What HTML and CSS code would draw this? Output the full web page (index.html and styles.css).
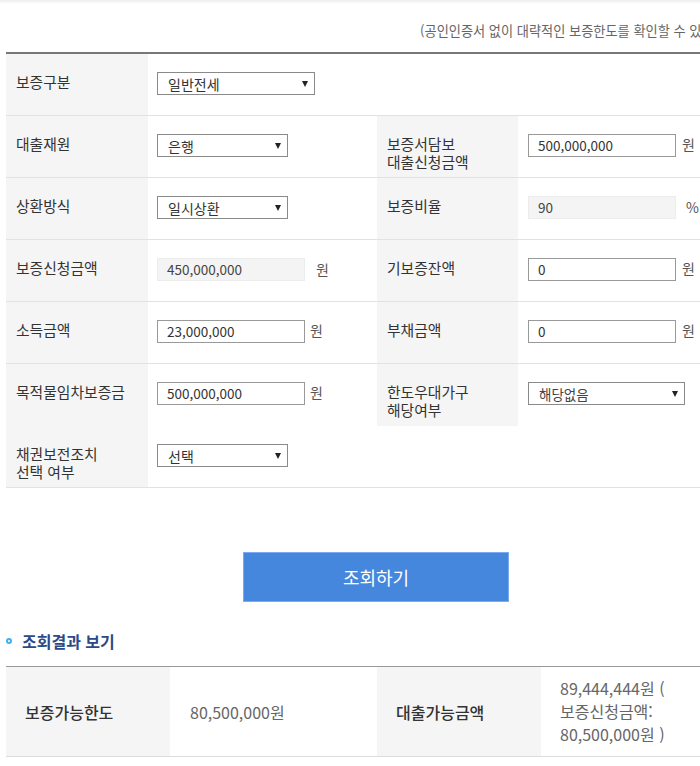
FILE: index.html
```html
<!DOCTYPE html>
<html lang="ko">
<head>
<meta charset="utf-8">
<title>보증한도 조회</title>
<link rel="stylesheet" href="styles.css">
</head>
<body>
<div class="shade"></div>
<div class="wrap">
  <p class="note">(공인인증서 없이 대략적인 보증한도를 확인할 수 있습니다.)</p>

  <div class="form">
    <div class="row">
      <div class="lab">보증구분</div>
      <div class="val"><div class="sel w158"><span>일반전세</span><i class="arr"></i></div></div>
      <div class="blank"></div>
      <div class="blank"></div>
    </div>
    <div class="row">
      <div class="lab">대출재원</div>
      <div class="val"><div class="sel w131"><span>은행</span><i class="arr"></i></div></div>
      <div class="lab">보증서담보<br>대출신청금액</div>
      <div class="val r"><div class="inp">500,000,000</div><span class="unit">원</span></div>
    </div>
    <div class="row">
      <div class="lab">상환방식</div>
      <div class="val"><div class="sel w131"><span>일시상환</span><i class="arr"></i></div></div>
      <div class="lab">보증비율</div>
      <div class="val r"><div class="inp dis">90</div><span class="unit pct">%</span></div>
    </div>
    <div class="row">
      <div class="lab">보증신청금액</div>
      <div class="val"><div class="inp dis">450,000,000</div><span class="unit far">원</span></div>
      <div class="lab">기보증잔액</div>
      <div class="val r"><div class="inp">0</div><span class="unit">원</span></div>
    </div>
    <div class="row">
      <div class="lab">소득금액</div>
      <div class="val"><div class="inp">23,000,000</div><span class="unit">원</span></div>
      <div class="lab">부채금액</div>
      <div class="val r"><div class="inp">0</div><span class="unit">원</span></div>
    </div>
    <div class="row nb">
      <div class="lab">목적물임차보증금</div>
      <div class="val"><div class="inp">500,000,000</div><span class="unit">원</span></div>
      <div class="lab">한도우대가구<br>해당여부</div>
      <div class="val r"><div class="sel w157 sm"><span>해당없음</span><i class="arr"></i></div></div>
    </div>
    <div class="row">
      <div class="lab">채권보전조치<br>선택 여부</div>
      <div class="val"><div class="sel w131"><span>선택</span><i class="arr"></i></div></div>
      <div class="blank"></div>
      <div class="blank"></div>
    </div>
  </div>

  <div class="btnbox"><button class="btn" type="button">조회하기</button></div>

  <h3 class="title"><i class="dot"></i>조회결과 보기</h3>

  <div class="result">
    <div class="rlab">보증가능한도</div>
    <div class="rval">80,500,000원</div>
    <div class="rlab">대출가능금액</div>
    <div class="rval multi">89,444,444원 (<br>보증신청금액:<br>80,500,000원 )</div>
  </div>
</div>
</body>
</html>
```

FILE: styles.css
```css
html, body {
  margin: 0;
  padding: 0;
  background: #fff;
  overflow: hidden;
}
body {
  font-family: "Noto Sans CJK KR", "Noto Sans", sans-serif;
  color: #333;
  width: 700px;
}
.shade {
  height: 4px;
  background: linear-gradient(#ededed, #fff);
}
.wrap {
  width: 740px;
  margin-left: 6px;
}
.note {
  margin: 17px 0 11px;
  text-align: right;
  font-size: 13.2px;
  line-height: 20px;
  color: #666;
}
.form {
  border-top: 2px solid #777;
}
.row {
  display: grid;
  grid-template-columns: 142px 229px 141px 228px;
  height: 62px;
  box-sizing: border-box;
  border-bottom: 1px solid #e2e2e2;
}
.row.nb {
  border-bottom: none;
}
.lab {
  background: #f5f5f5;
  padding: 19px 0 0 10px;
  font-size: 14.8px;
  line-height: 18px;
  color: #333;
}
.val {
  display: flex;
  align-items: flex-start;
  padding: 18px 0 0 9px;
}
.val.r {
  padding-left: 10px;
}
.sel {
  box-sizing: border-box;
  height: 23px;
  border: 1px solid #8a8a8a;
  display: flex;
  align-items: center;
  justify-content: space-between;
  padding: 0 6px 0 10px;
  font-size: 14px;
  color: #333;
  background: #fff;
}
.sel.sm { font-size: 13.5px; color: #444; }
.w158 { width: 158px; }
.w131 { width: 131px; }
.w157 { width: 157px; }
.arr {
  width: 0;
  height: 0;
  border-left: 3px solid transparent;
  border-right: 3px solid transparent;
  border-top: 6px solid #222;
}
.inp {
  box-sizing: border-box;
  width: 148px;
  height: 23px;
  border: 1px solid #999;
  padding-left: 9px;
  font-size: 13.5px;
  line-height: 21px;
  color: #333;
}
.inp.dis {
  background: #f4f4f4;
  border-color: #ececec;
  color: #444;
}
.unit {
  margin-left: 5px;
  font-size: 14px;
  line-height: 20px;
  color: #555;
}
.unit.far { margin-left: 11px; line-height: 23px; }
.val.r .unit { margin-left: 6px; }
.val.r .unit.pct { margin-left: 10px; line-height: 23px; }
.btnbox {
  display: flex;
  justify-content: center;
  margin-top: 64px;
}
.btn {
  width: 266px;
  height: 50px;
  background: #4587dd;
  border: 1px solid #7caaf0;
  color: #fff;
  font-family: inherit;
  font-size: 18px;
  padding: 0;
}
.title {
  display: flex;
  align-items: center;
  margin: 28px 0 14px;
  font-size: 16px;
  line-height: 22px;
  font-weight: 700;
  color: #2b4a88;
}
.dot {
  width: 6px;
  height: 6px;
  box-sizing: border-box;
  border: 2px solid #3cb1f0;
  border-radius: 50%;
  margin-right: 10px;
}
.result {
  display: grid;
  grid-template-columns: 164px 207px 164px 205px;
  height: 91px;
  box-sizing: border-box;
  border-top: 1px solid #999;
  border-bottom: 1px solid #ddd;
}
.rlab {
  background: #f5f5f5;
  display: flex;
  align-items: center;
  padding-left: 19px;
  font-size: 16px;
  font-weight: 500;
  color: #333;
}
.rval {
  display: flex;
  align-items: center;
  padding-left: 20px;
  font-size: 16px;
  font-weight: 400;
  color: #666;
}
.rval.multi {
  padding-left: 19px;
  line-height: 23px;
}
```
